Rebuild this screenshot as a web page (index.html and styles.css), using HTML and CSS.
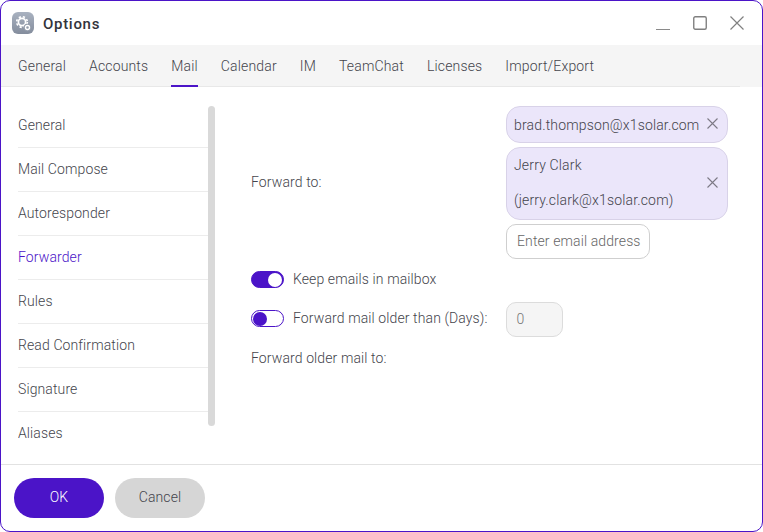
FILE: index.html
```html
<!DOCTYPE html>
<html>
<head>
<meta charset="UTF-8">
<meta name="viewport" content="initial-scale=1, maximum-scale=1">
<title>Options</title>
<link rel="stylesheet" href="styles.css">
</head>
<body>
<div class="window">
    <div class="titlebar">
        <div class="app-icon">
            <svg width="22" height="22" viewBox="0 0 22 22">
                <g fill="none" stroke="#fff">
                    <circle cx="10" cy="10" r="3.6" stroke-width="1.7"/>
                    <circle cx="10" cy="10" r="5.3" stroke-width="1.7" stroke-dasharray="2.2 2"/>
                    <circle cx="15.5" cy="15.5" r="3.8" fill="#939cab" stroke="none"/>
                    <circle cx="15.5" cy="15.5" r="2" stroke-width="1.4"/>
                </g>
            </svg>
        </div>
        <div class="title">Options</div>
        <div class="win-buttons">
            <svg width="14" height="14" viewBox="0 0 14 14"><path d="M0 13.5H14" stroke="#8a8a8a" fill="none"/></svg>
            <svg width="14" height="14" viewBox="0 0 14 14"><rect x=".75" y=".75" width="12.5" height="12.5" rx="1.5" stroke="#808080" stroke-width="1.4" fill="none"/></svg>
            <svg width="14" height="14" viewBox="0 0 14 14"><path d="M.5 .5L13.5 13.5M13.5 .5L.5 13.5" stroke="#808080" stroke-width="1.2" fill="none"/></svg>
        </div>
    </div>
    <div class="tabs">
        <div class="tab">General</div>
        <div class="tab">Accounts</div>
        <div class="tab active">Mail</div>
        <div class="tab">Calendar</div>
        <div class="tab">IM</div>
        <div class="tab">TeamChat</div>
        <div class="tab">Licenses</div>
        <div class="tab">Import/Export</div>
    </div>
    <div class="body">
        <div class="sidebar">
            <div class="side-list">
                <div class="side-item">General</div>
                <div class="side-item">Mail Compose</div>
                <div class="side-item">Autoresponder</div>
                <div class="side-item active">Forwarder</div>
                <div class="side-item">Rules</div>
                <div class="side-item">Read Confirmation</div>
                <div class="side-item">Signature</div>
                <div class="side-item">Aliases</div>
            </div>
            <div class="scrollbar"></div>
        </div>
        <div class="main">
            <div class="forward-row">
                <div class="label">Forward to:</div>
                <div class="recipients">
                    <div class="chip">
                        <span>brad.thompson@x1solar.com</span>
                        <svg width="11" height="11" viewBox="0 0 11 11"><path d="M.5 .5L10.5 10.5M10.5 .5L.5 10.5" stroke="#7d7a85" stroke-width="1.1" fill="none"/></svg>
                    </div>
                    <div class="chip chip-tall">
                        <span>Jerry Clark<br>(jerry.clark@x1solar.com)</span>
                        <svg width="11" height="11" viewBox="0 0 11 11"><path d="M.5 .5L10.5 10.5M10.5 .5L.5 10.5" stroke="#7d7a85" stroke-width="1.1" fill="none"/></svg>
                    </div>
                    <div class="email-input">Enter email address</div>
                </div>
            </div>
            <div class="toggle-row keep-row">
                <div class="toggle on"><i></i></div>
                <div class="label">Keep emails in mailbox</div>
            </div>
            <div class="toggle-row older-row">
                <div class="toggle"><i></i></div>
                <div class="label">Forward mail older than (Days):</div>
                <div class="days-input">0</div>
            </div>
            <div class="label older-to">Forward older mail to:</div>
        </div>
    </div>
    <div class="footer">
        <div class="btn btn-primary">OK</div>
        <div class="btn btn-cancel">Cancel</div>
    </div>
</div>
</body>
</html>
```

FILE: styles.css
```css
* { padding: 0; margin: 0; box-sizing: border-box; }
html, body {
    width: 100%;
    height: 100%;
}
body {
    overflow: hidden;
    background: #fff;
    font-family: Roboto, "Liberation Sans", sans-serif;
    font-size: 14px;
    font-weight: 300;
    letter-spacing: .11px;
    color: #44444c;
}
.window {
    display: flex;
    flex-direction: column;
    width: 763px;
    height: 532px;
    border: 1px solid #4b14c8;
    border-radius: 10px;
    overflow: hidden;
    background: #fff;
}
.titlebar {
    display: flex;
    align-items: center;
    height: 44px;
    flex: none;
    padding: 2px 18px 0 11px;
}
.app-icon {
    display: flex;
    width: 22px;
    height: 22px;
    margin-top: -2px;
    border-radius: 6px;
    background: linear-gradient(#a9b2c0, #848d9d);
}
.title {
    margin-left: 9px;
    font-size: 15px;
    font-weight: 500;
    letter-spacing: .7px;
    color: #33333b;
}
.win-buttons {
    display: flex;
    gap: 23px;
    margin-top: -2px;
    margin-left: auto;
}
.tabs {
    display: flex;
    flex: none;
    gap: 23px;
    height: 42px;
    padding: 0 17px;
    background: #f5f5f5 linear-gradient(#e8e8e8, #e8e8e8) no-repeat 0 100% / 739px 1px;
    letter-spacing: .16px;
}
.tab {
    line-height: 42px;
}
.tab.active {
    border-bottom: 2px solid #4b14c8;
    height: 42px;
}
.body {
    display: flex;
    flex: 1;
    min-height: 0;
}
.sidebar {
    display: flex;
    width: 197px;
    margin-left: 17px;
    padding-top: 17px;
    flex: none;
    overflow: hidden;
}
.side-list {
    flex: 1;
}
.side-item {
    height: 44px;
    line-height: 43px;
    border-bottom: 1px solid #ececec;
}
.side-item:last-child {
    border-bottom: 0;
}
.side-item.active {
    color: #4b14c8;
}
.scrollbar {
    width: 7px;
    height: 320px;
    margin: 2px 0 0 -7px;
    border-radius: 4px;
    background: #d9d9d9;
    flex: none;
}
.main {
    flex: 1;
    padding: 19px 34px 0 36px;
}
.forward-row {
    display: flex;
    align-items: center;
    justify-content: space-between;
}
.forward-row .label {
    margin-top: -2px;
}
.recipients {
    display: flex;
    flex-direction: column;
    align-items: flex-start;
    gap: 4px;
    width: 222px;
}
.chip {
    display: flex;
    align-items: center;
    justify-content: space-between;
    width: 222px;
    height: 37px;
    padding: 0 9px 0 7px;
    border: 1px solid #d8d2e8;
    border-radius: 14px;
    background: #ebe6fa;
    letter-spacing: .16px;
}
.chip svg {
    margin-top: -2px;
}
.chip-tall {
    height: 73px;
    line-height: 35px;
}
.chip-tall span {
    margin-top: -1px;
}
.email-input {
    width: 144px;
    height: 35px;
    padding-left: 10px;
    border: 1px solid #cfcfcf;
    border-radius: 10px;
    line-height: 33px;
    color: #666;
}
.toggle-row {
    display: flex;
    align-items: center;
}
.keep-row {
    margin-top: 12px;
}
.keep-row .label {
    margin-top: -2px;
}
.older-row {
    margin-top: 14px;
}
.older-row .toggle {
    margin-top: -2px;
}
.older-row .label {
    margin-top: -4px;
}
.toggle {
    display: flex;
    align-items: center;
    width: 33px;
    height: 17px;
    padding: 0 1px;
    margin-right: 9px;
    border: 1px solid #4b14c8;
    border-radius: 9px;
    background: #fff;
}
.toggle i {
    width: 14px;
    height: 14px;
    border-radius: 50%;
    background: #4b14c8;
}
.toggle.on {
    justify-content: flex-end;
    background: #4b14c8;
}
.toggle.on i {
    background: #fff;
}
.days-input {
    width: 57px;
    height: 35px;
    margin-left: 18px;
    padding-left: 10px;
    border: 1px solid #dcdcdc;
    border-radius: 10px;
    background: #f5f5f5;
    line-height: 33px;
    color: #777;
}
.older-to {
    margin-top: 13px;
}
.footer {
    display: flex;
    flex: none;
    align-items: center;
    gap: 11px;
    height: 67px;
    padding-left: 13px;
    border-top: 1px solid #e2e2e2;
}
.btn {
    width: 90px;
    height: 40px;
    border-radius: 20px;
    line-height: 39px;
    text-align: center;
}
.btn-primary {
    background: #4b14c8;
    color: #fff;
}
.btn-cancel {
    background: #d6d6d6;
}
```
